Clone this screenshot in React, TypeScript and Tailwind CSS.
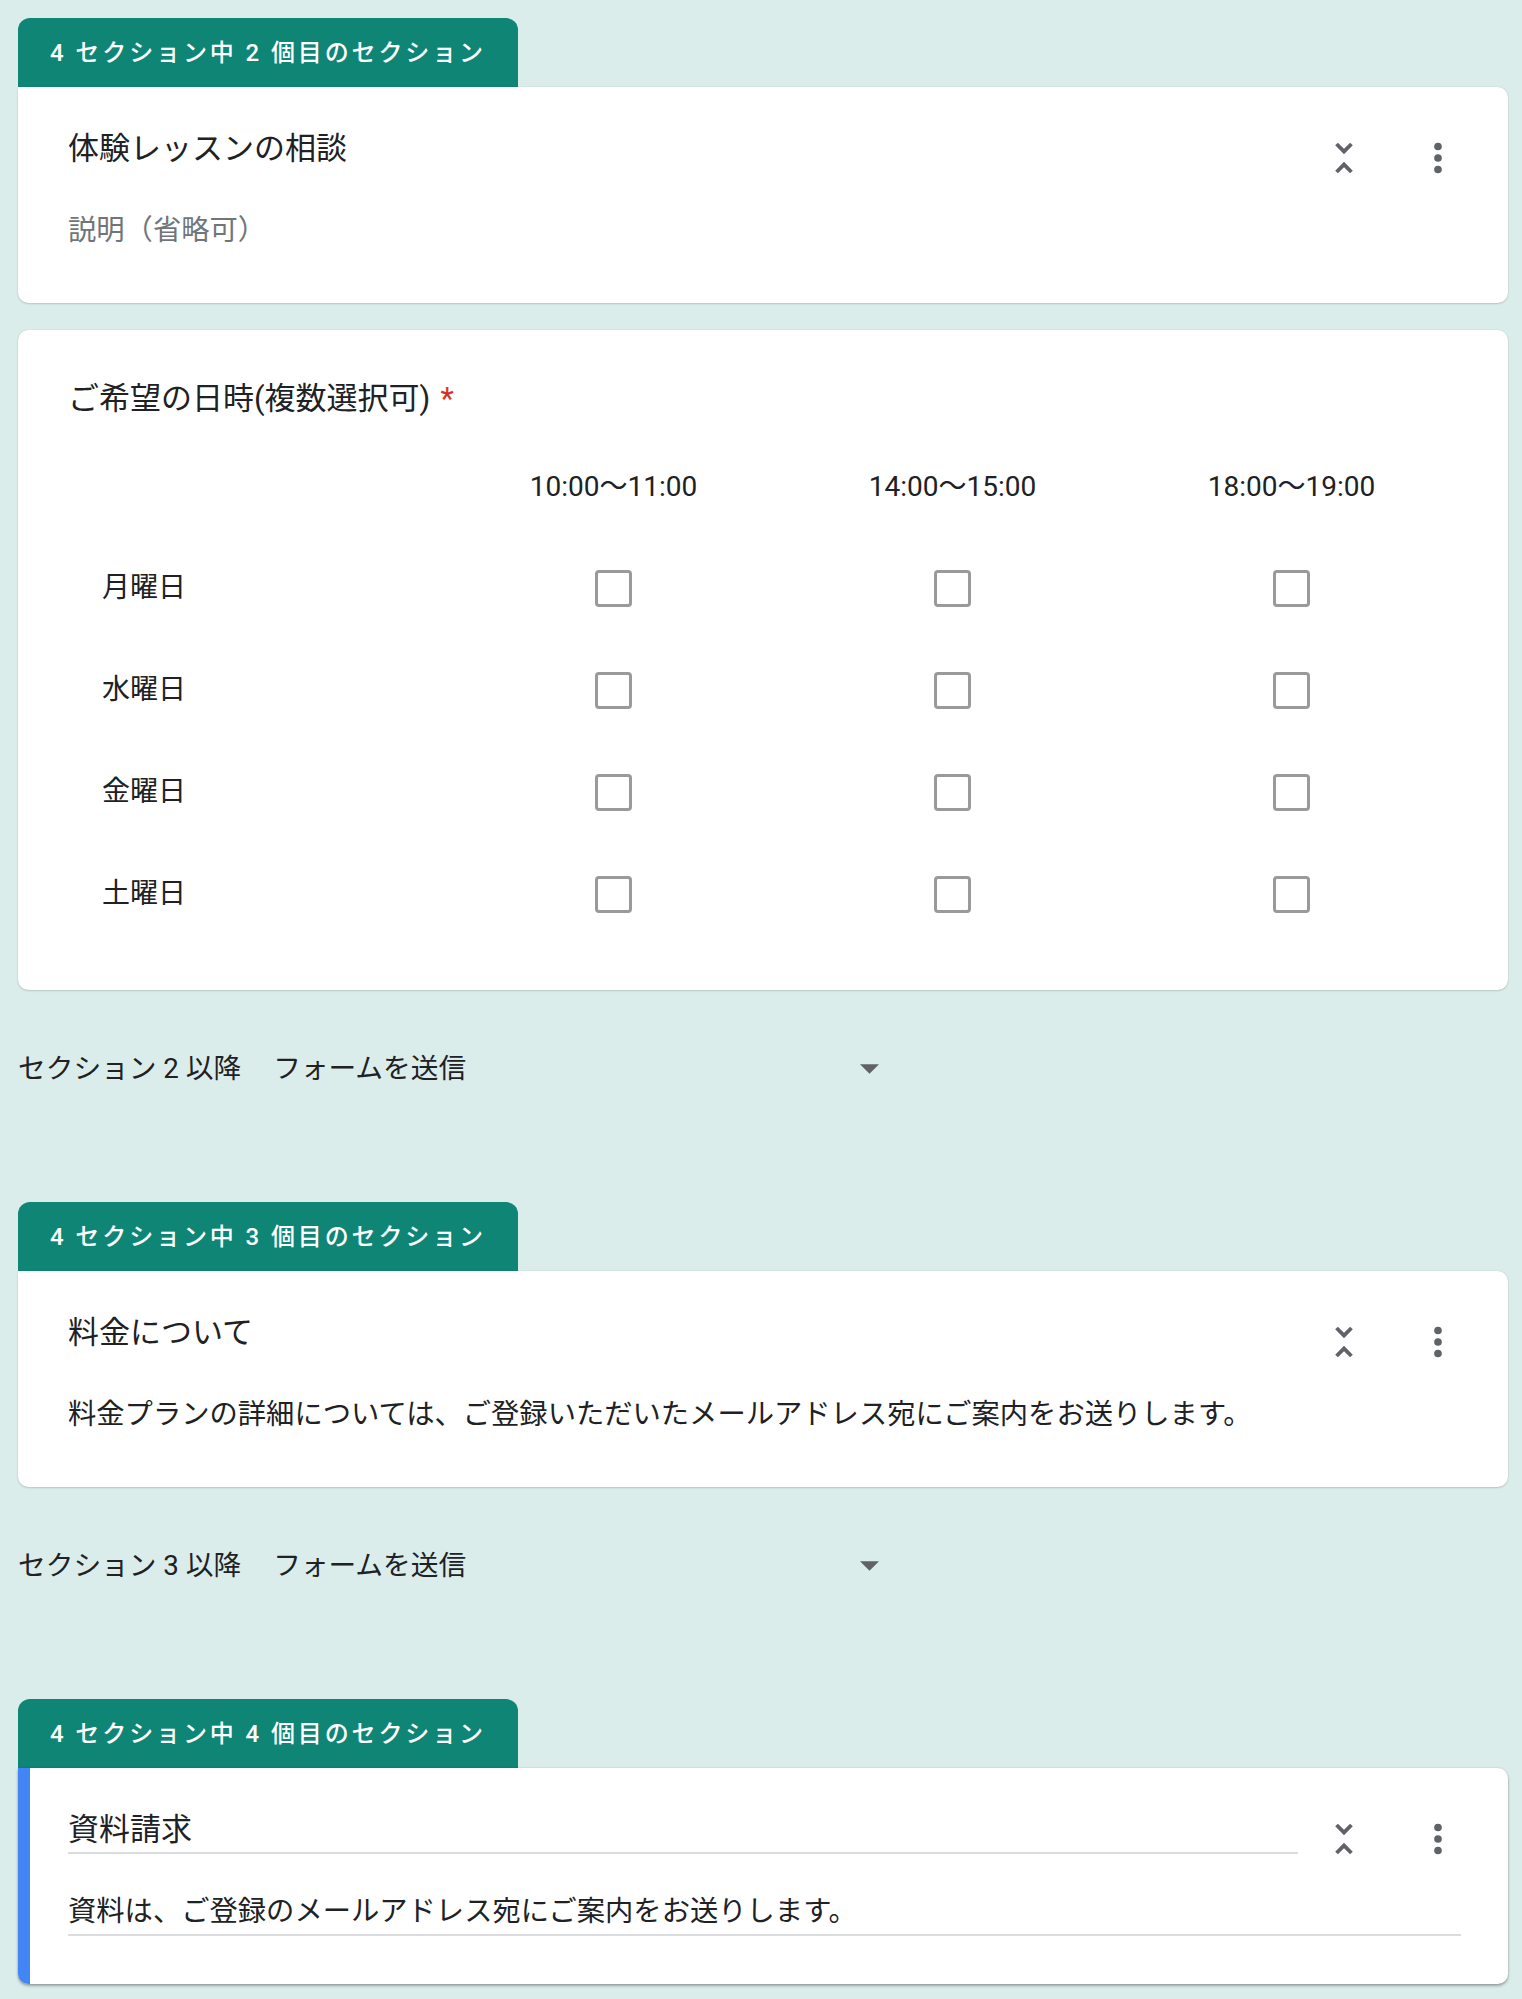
import React from 'react';

const times = ['10:00〜11:00', '14:00〜15:00', '18:00〜19:00'];
const days = ['月曜日', '水曜日', '金曜日', '土曜日'];

function UnfoldLess() {
    return (
        <svg viewBox="0 0 24 24" className="w-[46px] h-[46px] fill-[#5f6368]">
            <path d="M7.41 18.59L8.83 20 12 16.83 15.17 20l1.41-1.41L12 14l-4.59 4.59zm9.18-13.18L15.17 4 12 7.17 8.83 4 7.41 5.41 12 10l4.59-4.59z" />
        </svg>
    );
}

function MoreVert() {
    return (
        <svg viewBox="0 0 24 24" className="w-[46px] h-[46px] fill-[#5f6368]">
            <circle cx="12" cy="6" r="2" />
            <circle cx="12" cy="12" r="2" />
            <circle cx="12" cy="18" r="2" />
        </svg>
    );
}

function SectionTab({ n }: { n: number }) {
    return (
        <div className="h-[69px] w-fit px-[32px] rounded-t-[12px] bg-[#0f8575] text-white text-[24px] tracking-[0.12em] font-medium flex items-center">
            4 セクション中 {n} 個目のセクション
        </div>
    );
}

interface SectionCardProps {
    title: string;
    desc: string;
    muted?: boolean;
    active?: boolean;
}

function SectionCard({ title, desc, muted, active }: SectionCardProps) {
    const line = active ? 'border-[#dadce0]' : 'border-transparent';
    return (
        <div
            className={
                'relative overflow-hidden bg-white rounded-b-[10px] rounded-tr-[10px] pl-[50px] pr-[47px] pt-[42px] pb-[48px] ' +
                (active
                    ? 'shadow-[0_2px_3px_rgba(0,0,0,0.3),0_0_2px_rgba(0,0,0,0.15)]'
                    : 'shadow-[0_1px_2px_rgba(0,0,0,0.15),0_0_1px_rgba(0,0,0,0.2)]')
            }
        >
            {active && <div className="absolute left-0 top-0 bottom-0 w-[12px] bg-[#4285f4]" />}
            <div className="flex items-start">
                <div className={'flex-1 text-[31px] leading-[40px] text-[#202124] pb-[2px] border-b-2 ' + line}>{title}</div>
                <div className="flex gap-[48px] ml-[23px] mt-[6px]">
                    <UnfoldLess />
                    <MoreVert />
                </div>
            </div>
            <div
                className={
                    'mt-[31px] text-[28.3px] leading-[38px] pb-[3px] border-b-2 ' +
                    line +
                    (muted ? ' text-[#70757a]' : ' text-[#202124]')
                }
            >
                {desc}
            </div>
        </div>
    );
}

function Checkbox() {
    return <div className="w-[37px] h-[37px] border-[3px] border-[#9a9a9a] rounded-[4px]" />;
}

function GridQuestion() {
    return (
        <div className="bg-white rounded-[10px] pl-[50px] pr-[47px] pt-[49px] pb-[45px] shadow-[0_1px_2px_rgba(0,0,0,0.15),0_0_1px_rgba(0,0,0,0.2)]">
            <div className="text-[31px] leading-[40px] text-[#202124]">
                ご希望の日時(複数選択可)
                <span className="ml-[10px] text-[#d93025]">*</span>
            </div>
            <div className="mt-[18px] grid grid-cols-[376px_1fr_1fr_1fr] text-[#202124]">
                <div className="h-[100px]" />
                {times.map((t) => (
                    <div key={t} className="h-[100px] flex items-center justify-center text-[28px]">
                        {t}
                    </div>
                ))}
                {days.map((d) => (
                    <React.Fragment key={d}>
                        <div className="h-[102px] flex items-center pl-[34px] text-[28px]">{d}</div>
                        {times.map((t) => (
                            <div key={t} className="h-[102px] flex items-center justify-center">
                                <Checkbox />
                            </div>
                        ))}
                    </React.Fragment>
                ))}
            </div>
        </div>
    );
}

function AfterSection({ n }: { n: number }) {
    return (
        <div className="mt-[61px] mb-[115px] flex items-center text-[27.7px] leading-[36px] text-[#202124]">
            <span>セクション {n} 以降</span>
            <div className="ml-[32px] w-[606px] flex items-center justify-between">
                <span>フォームを送信</span>
                <svg viewBox="0 0 20 10" className="w-[19px] h-[10px] fill-[#5f6368]">
                    <path d="M0 0h20L10 10z" />
                </svg>
            </div>
        </div>
    );
}

export default function App() {
    return (
        <div className="min-h-screen bg-[#dbedea] pt-[18px] pb-[17px] pl-[18px] pr-[14px] font-[Roboto,'Noto_Sans_CJK_JP',sans-serif]">
            <SectionTab n={2} />
            <SectionCard title="体験レッスンの相談" desc="説明（省略可）" muted />
            <div className="mt-[27px]">
                <GridQuestion />
            </div>
            <AfterSection n={2} />

            <SectionTab n={3} />
            <SectionCard
                title="料金について"
                desc="料金プランの詳細については、ご登録いただいたメールアドレス宛にご案内をお送りします。"
            />
            <AfterSection n={3} />

            <SectionTab n={4} />
            <SectionCard title="資料請求" desc="資料は、ご登録のメールアドレス宛にご案内をお送りします。" active />
        </div>
    );
}
